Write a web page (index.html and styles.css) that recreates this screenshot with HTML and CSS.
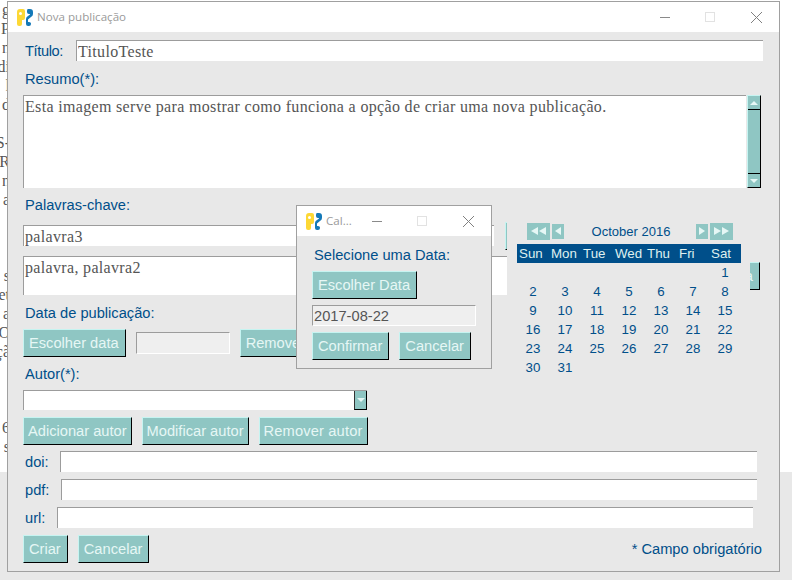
FILE: index.html
```html
<!DOCTYPE html>
<html lang="pt">
<head>
    <meta charset="UTF-8">
    <meta name="viewport" content="width=device-width, initial-scale=1.0">
    <title>Nova publicação</title>
    <link rel="stylesheet" href="styles.css">
</head>
<body>

<svg class="defs" width="0" height="0">
    <symbol id="app-icon" viewBox="0 0 16 17">
        <path fill="#fdd835" fill-rule="evenodd" d="M3 0h3q2 0 2 2v7q0 2-2 2H5v4q0 2-2 2H2q-2 0-2-2V3q0-3 3-3zM3.500 3a1.500 1.500 0 1 0 0 3 1.500 1.500 0 0 0 0-3z"/>
        <path fill="#1479b8" fill-rule="evenodd" d="M12 0h1q3 0 3 3v2q0 2-2 3l-3 2.500V13h1q2 0 2 1.500V15q0 2-2 2h-1q-2 0-2-2v-5q0-2 2-3l2-1.500V5h-1q-2 0-2-2V2q0-2 1-2z"/>
    </symbol>
</svg>

<!-- Pagina por tras das janelas -->
<div class="sheet">
    <div class="sheet-text">
        <p>g</p><p>P</p><p>n</p><p>di</p><p>l</p><p>d</p><p>&nbsp;</p><p>S-</p><p>R</p><p>n</p><p>a</p>
        <p>&nbsp;</p><p>&nbsp;</p><p>&nbsp;</p><p>s</p><p>et</p><p>a</p><p>O</p><p>çã</p>
        <p>&nbsp;</p><p>&nbsp;</p><p>&nbsp;</p><p>6</p><p>s</p>
    </div>
</div>

<!-- Janela principal -->
<div class="window main-window">
    <div class="titlebar">
        <svg class="app-icon"><use href="#app-icon"/></svg>
        <span class="title">Nova publicação</span>
        <span class="controls">
            <span class="ctl-min"></span>
            <span class="ctl-max"></span>
            <svg class="ctl-close" viewBox="0 0 11 11"><path d="M0 0l11 11M11 0L0 11"/></svg>
        </span>
    </div>

    <div class="form">
        <div class="row row-title">
            <label class="lbl lbl-title">Título:</label>
            <input class="field serif field-title" type="text" value="TituloTeste">
        </div>

        <label class="lbl lbl-resumo">Resumo(*):</label>
        <div class="row row-resumo">
            <textarea class="field serif area-resumo">Esta imagem serve para mostrar como funciona a opção de criar uma nova publicação.</textarea>
            <div class="scrollbar">
                <span class="sb-btn"><i class="tri-up"></i></span>
                <span class="sb-track"></span>
                <span class="sb-btn"><i class="tri-down"></i></span>
            </div>
        </div>

        <label class="lbl lbl-palavras">Palavras-chave:</label>
        <div class="row row-kw">
            <input class="field serif field-kw" type="text" value="palavra3">
            <button class="btn btn-kw-add">Adicionar palavra</button>
        </div>
        <div class="row row-kwlist">
            <textarea class="field serif area-kw">palavra, palavra2</textarea>
            <button class="btn btn-kw-del">Remover palavra</button>
        </div>

        <label class="lbl lbl-data">Data de publicação:</label>
        <div class="row row-data">
            <button class="btn">Escolher data</button>
            <input class="field readonly field-date" type="text" readonly>
            <button class="btn">Remover data</button>
        </div>

        <label class="lbl lbl-autor">Autor(*):</label>
        <div class="combo">
            <span class="combo-arrow"><i class="tri-down"></i></span>
        </div>
        <div class="row row-autor">
            <button class="btn">Adicionar autor</button>
            <button class="btn">Modificar autor</button>
            <button class="btn">Remover autor</button>
        </div>

        <div class="row row-link row-doi">
            <label class="lbl">doi:</label>
            <input class="field" type="text">
        </div>
        <div class="row row-link row-pdf">
            <label class="lbl">pdf:</label>
            <input class="field" type="text">
        </div>
        <div class="row row-link row-url">
            <label class="lbl">url:</label>
            <input class="field" type="text">
        </div>

        <div class="row row-end">
            <button class="btn">Criar</button>
            <button class="btn">Cancelar</button>
            <span class="lbl note">* Campo obrigatório</span>
        </div>
    </div>
</div>

<!-- Calendario -->
<div class="calendar">
    <div class="cal-nav">
        <span class="cal-arrow wide"><i class="tri-left"></i><i class="tri-left"></i></span>
        <span class="cal-arrow"><i class="tri-left"></i></span>
        <span class="cal-month">October 2016</span>
        <span class="cal-arrow"><i class="tri-right"></i></span>
        <span class="cal-arrow wide"><i class="tri-right"></i><i class="tri-right"></i></span>
    </div>
    <div class="cal-head">
        <span>Sun</span><span>Mon</span><span>Tue</span><span>Wed</span><span>Thu</span><span>Fri</span><span>Sat</span>
    </div>
    <div class="cal-days">
        <span></span><span></span><span></span><span></span><span></span><span></span><span>1</span>
        <span>2</span><span>3</span><span>4</span><span>5</span><span>6</span><span>7</span><span>8</span>
        <span>9</span><span>10</span><span>11</span><span>12</span><span>13</span><span>14</span><span>15</span>
        <span>16</span><span>17</span><span>18</span><span>19</span><span>20</span><span>21</span><span>22</span>
        <span>23</span><span>24</span><span>25</span><span>26</span><span>27</span><span>28</span><span>29</span>
        <span>30</span><span>31</span>
    </div>
</div>

<!-- Dialogo de data -->
<div class="window dialog">
    <div class="titlebar">
        <svg class="app-icon"><use href="#app-icon"/></svg>
        <span class="title">Cal...</span>
        <span class="controls">
            <span class="ctl-min"></span>
            <span class="ctl-max"></span>
            <svg class="ctl-close" viewBox="0 0 11 11"><path d="M0 0l11 11M11 0L0 11"/></svg>
        </span>
    </div>
    <div class="dialog-body">
        <label class="lbl lbl-sel">Selecione uma Data:</label>
        <button class="btn">Escolher Data</button>
        <input class="field readonly field-picked" type="text" value="2017-08-22" readonly>
        <div class="row row-dialog">
            <button class="btn">Confirmar</button>
            <button class="btn">Cancelar</button>
        </div>
    </div>
</div>

</body>
</html>
```

FILE: styles.css
```css
/* Pagina */
html, body {
    margin: 0;
    padding: 0;
}

body {
    width: 792px;
    height: 580px;
    overflow: hidden;
    background: #e8e8e8;
    font-family: "Liberation Sans", Arial, sans-serif;
    font-size: 14.67px;
    color: #004f8a;
}

.defs {
    position: absolute;
}

.sheet {
    height: 472px;
    background: #fff;
}

.sheet-text {
    width: 10px;
    height: 472px;
    overflow: hidden;
    display: flex;
    flex-direction: column;
    align-items: flex-end;
    font-family: "Liberation Serif", serif;
    font-size: 16px;
    line-height: 19px;
    color: #555;
}

.sheet-text p {
    margin: 0;
    white-space: nowrap;
}

/* Janelas */
.window {
    position: absolute;
    box-sizing: border-box;
    border: 1px solid #a0a0a0;
    background: #e8e8e8;
}

.main-window {
    left: 7px;
    top: 1px;
    width: 773px;
    height: 571px;
}

.dialog {
    left: 296px;
    top: 205px;
    width: 196px;
    height: 164px;
}

.titlebar {
    height: 30px;
    display: flex;
    align-items: center;
    background: #fff;
    padding-left: 9px;
    font-family: "Open Sans", sans-serif;
    font-size: 11.6px;
    color: #9a9a9a;
}

.app-icon {
    width: 16px;
    height: 17px;
    flex: none;
}

.title {
    margin-left: 4px;
    margin-bottom: 2px;
}

.controls {
    margin-left: auto;
    display: flex;
    align-items: center;
}

.ctl-min {
    width: 10px;
    height: 1px;
    background: #8a8a8a;
}

.ctl-max {
    box-sizing: border-box;
    width: 10px;
    height: 10px;
    border: 1px solid #e2e2e2;
    margin-left: 35px;
}

.ctl-close {
    width: 11px;
    height: 11px;
    margin-left: 36px;
    margin-right: 17px;
}

.ctl-close path {
    fill: none;
    stroke: #808080;
    stroke-width: 1;
}

/* Formulario */
.form {
    padding-left: 15px;
}

.row {
    display: flex;
    align-items: center;
}

.lbl {
    display: block;
    height: 18px;
    line-height: 18px;
    padding-left: 2px;
}

.field {
    box-sizing: border-box;
    display: block;
    height: 21px;
    margin: 0;
    padding: 0 1px;
    border: 0;
    border-top: 1px solid #9c9c9c;
    border-left: 1px solid #9c9c9c;
    border-radius: 0;
    outline: 0;
    background: #fff;
    color: #555;
    font-family: "Liberation Sans", Arial, sans-serif;
    font-size: 14.67px;
    resize: none;
    overflow: hidden;
}

.serif {
    font-family: "Liberation Serif", serif;
    font-size: 16px;
    letter-spacing: 0.33px;
    padding-top: 2px;
}

.readonly {
    background: #efefef;
    border-right: 1px solid #fff;
    border-bottom: 1px solid #fff;
}

.btn {
    box-sizing: border-box;
    height: 28px;
    margin: 0;
    padding: 0 6px 0 5px;
    flex: none;
    background: #8fc6c3;
    border: 1px solid;
    border-color: #c6f4f1 #000 #000 #c6f4f1;
    border-radius: 0;
    color: #e6f7f5;
    font-family: "Liberation Sans", Arial, sans-serif;
    font-size: 14.67px;
    white-space: nowrap;
}

/* Titulo e resumo */
.row-title {
    margin-top: 8px;
}

.lbl-title {
    width: 53px;
    box-sizing: border-box;
    flex: none;
    letter-spacing: -0.4px;
}

.field-title {
    width: 687px;
}

.lbl-resumo {
    margin-top: 9px;
}

.row-resumo {
    margin-top: 7px;
    align-items: stretch;
    height: 93px;
}

.area-resumo {
    width: 723px;
    height: 93px;
}

.scrollbar {
    box-sizing: border-box;
    width: 14px;
    margin-left: 1px;
    display: flex;
    flex-direction: column;
    background: #8fc6c3;
    border-right: 1px solid #000;
    border-bottom: 1px solid #000;
    border-left: 1px solid #c6f4f1;
    border-top: 1px solid #c6f4f1;
}

.sb-btn {
    height: 13px;
    flex: none;
    display: flex;
    align-items: center;
    justify-content: center;
}

.sb-btn:first-child {
    border-bottom: 1px solid #000;
}

.sb-btn:last-child {
    border-top: 1px solid #000;
}

.sb-track {
    flex: 1;
}

/* Triangulos das setas */
.tri-up, .tri-down {
    width: 0;
    height: 0;
    border-left: 4px solid transparent;
    border-right: 4px solid transparent;
}

.tri-up {
    border-bottom: 4px solid #e6f7f5;
}

.tri-down {
    border-top: 4px solid #e6f7f5;
}

.tri-left, .tri-right {
    width: 0;
    height: 0;
    border-top: 4px solid transparent;
    border-bottom: 4px solid transparent;
}

.tri-left {
    border-right: 6px solid #e6f7f5;
}

.tri-right {
    border-left: 6px solid #e6f7f5;
}

/* Palavras-chave */
.lbl-palavras {
    margin-top: 8px;
}

.row-kw {
    margin-top: 8px;
    height: 28px;
}

.field-kw {
    width: 471px;
    margin-top: -1px;
}

.btn-kw-add {
    margin-left: 11px;
}

.row-kwlist {
    margin-top: 6px;
    height: 39px;
}

.area-kw {
    width: 484px;
    height: 39px;
}

.btn-kw-del {
    margin-left: auto;
    margin-right: 19px;
}

/* Data */
.lbl-data {
    margin-top: 9px;
}

.row-data {
    margin-top: 7px;
    height: 28px;
}

.field-date {
    width: 94px;
    height: 22px;
    margin: 0 10px;
}

/* Autor */
.lbl-autor {
    margin-top: 8px;
}

.combo {
    box-sizing: border-box;
    width: 344px;
    height: 20px;
    margin-top: 7px;
    display: flex;
    justify-content: flex-end;
    background: #fff;
    border-top: 1px solid #9c9c9c;
    border-left: 1px solid #9c9c9c;
}

.combo-arrow {
    box-sizing: border-box;
    width: 13px;
    display: flex;
    align-items: center;
    justify-content: center;
    background: #8fc6c3;
    border-right: 1px solid #000;
    border-bottom: 1px solid #000;
    border-left: 1px solid #333;
}

.row-autor {
    margin-top: 7px;
    gap: 10px;
}

.row-autor .btn {
    padding: 0 4px;
}

.row-autor .btn:last-child {
    width: 109px;
    letter-spacing: 0.15px;
}

/* doi, pdf, url */
.row-link {
    height: 21px;
}

.row-link .field {
    flex: none;
}

.row-doi {
    margin-top: 6px;
}

.row-doi .lbl {
    width: 37px;
    box-sizing: border-box;
}

.row-doi .field {
    width: 697px;
}

.row-pdf {
    margin-top: 7px;
}

.row-pdf .lbl {
    width: 38px;
    box-sizing: border-box;
}

.row-pdf .field {
    width: 696px;
}

.row-url {
    margin-top: 7px;
}

.row-url .lbl {
    width: 34px;
    box-sizing: border-box;
}

.row-url .field {
    width: 696px;
}

.row-end {
    margin-top: 7px;
    gap: 10px;
}

.note {
    margin-left: auto;
    margin-right: 17px;
}

/* Dialogo */
.dialog-body {
    padding: 10px 0 0 15px;
}

.dialog-body .btn {
    display: block;
}

.dialog-body > .btn {
    margin-top: 7px;
}

.field-picked {
    width: 164px;
    margin-top: 6px;
}

.row-dialog {
    margin-top: 6px;
    gap: 10px;
}

/* Kalendars */
.calendar {
    position: absolute;
    left: 507px;
    top: 218px;
    width: 243px;
    height: 167px;
    background: #e8e8e8;
}

.cal-nav {
    height: 26px;
    display: flex;
    align-items: center;
    padding-left: 20px;
    width: 208px;
}

.cal-arrow {
    width: 12px;
    height: 15px;
    flex: none;
    margin-right: 2px;
    display: flex;
    align-items: center;
    justify-content: center;
    background: #8fc6c3;
}

.cal-arrow.wide {
    width: 23px;
    height: 17px;
    gap: 1px;
}

.cal-arrow.wide i {
    border-left-width: 7px;
    border-right-width: 7px;
}

.cal-month {
    flex: 1;
    text-align: center;
    font-size: 13px;
}

.cal-head, .cal-days {
    margin-left: 10px;
    width: 224px;
    display: grid;
    grid-template-columns: repeat(7, 32px);
}

.cal-head {
    height: 19px;
    line-height: 19px;
    background: #004f8a;
    color: #dff0ef;
    font-size: 13.33px;
}

.cal-head span {
    padding-left: 2px;
}

.cal-days {
    grid-auto-rows: 19px;
    line-height: 19px;
    text-align: center;
    font-size: 13.33px;
}
```
